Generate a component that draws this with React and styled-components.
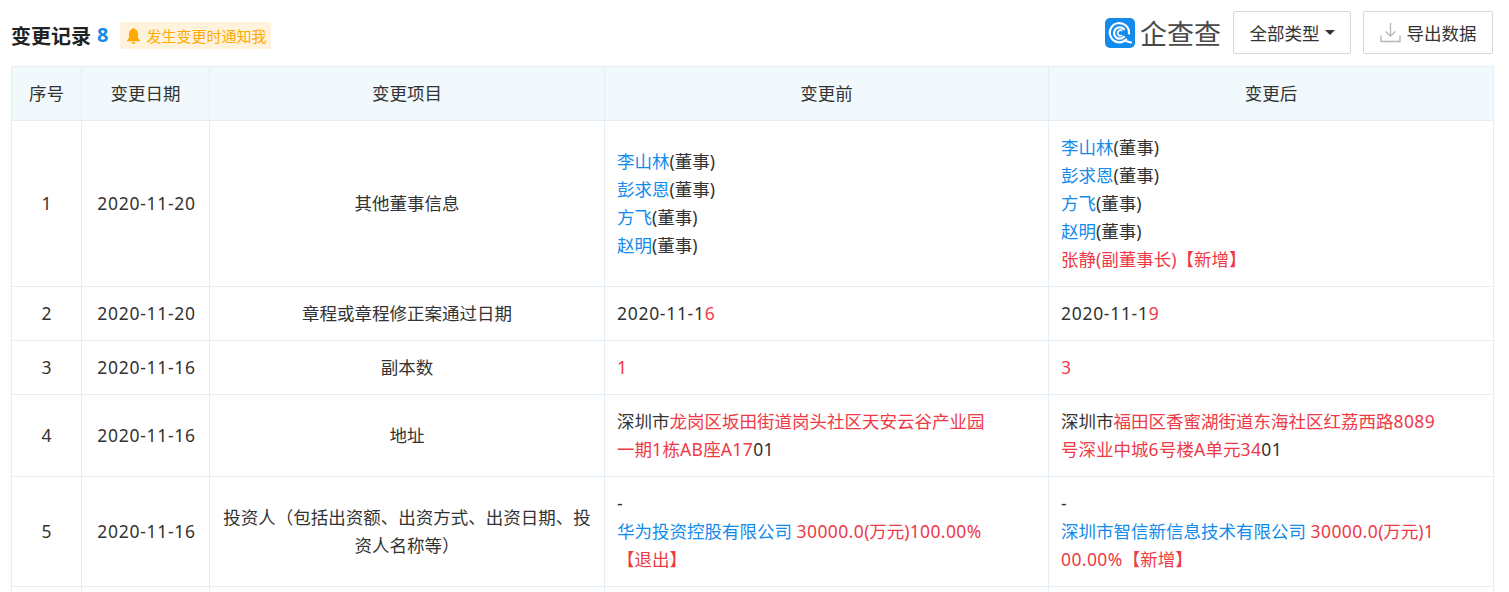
import React from "react";
import styled, { createGlobalStyle } from "styled-components";

const Global = createGlobalStyle`
  html, body { margin: 0; padding: 0; background: #fff; overflow: hidden; }
  body { font-family: "Noto Sans", "Noto Sans CJK SC", sans-serif; color: #333; }
`;

const Page = styled.div`
  width: 1509px;
  height: 592px;
  overflow: hidden;
  padding: 11px 16px 0 11px;
  box-sizing: border-box;
`;

const Toolbar = styled.header`
  display: flex;
  align-items: center;
  height: 43px;
  margin-bottom: 12px;
`;

const Heading = styled.div`
  display: flex;
  align-items: center;
  margin-top: 6px;
`;

const Title = styled.h3`
  margin: 0;
  font-size: 20px;
  font-weight: 700;
  color: #222;
  display: flex;
  gap: 6px;
`;

const Count = styled.span`
  color: #128bed;
`;

const Notice = styled.span`
  display: inline-flex;
  align-items: center;
  gap: 6px;
  height: 27px;
  margin-left: 12px;
  padding: 0 5px 0 7px;
  background: #fff3dd;
  border-radius: 2px;
  color: #ffaa00;
  font-size: 15px;
`;

const Tools = styled.div`
  margin-left: auto;
  display: flex;
  align-items: center;
`;

const Logo = styled.div`
  display: flex;
  align-items: center;
  gap: 5px;
  margin-right: 12px;
`;

const LogoText = styled.span`
  font-family: "Noto Sans CJK SC", sans-serif;
  font-weight: 400;
  font-size: 27px;
  color: #4a4a4a;
  line-height: 32px;
`;

const ToolButton = styled.button`
  display: inline-flex;
  align-items: center;
  justify-content: center;
  gap: ${(p) => p.$gap || 5}px;
  width: ${(p) => p.$width}px;
  height: 43px;
  margin-left: ${(p) => p.$left || 0}px;
  background: #fff;
  border: 1px solid #d6d6d6;
  border-radius: 2px;
  font: inherit;
  font-size: 17.5px;
  color: #333;
  padding: 0;
`;

const Caret = styled.i`
  width: 0;
  height: 0;
  border-left: 5px solid transparent;
  border-right: 5px solid transparent;
  border-top: 5px solid #333;
`;

const Table = styled.table`
  width: 1482px;
  table-layout: fixed;
  border-collapse: collapse;
  font-size: 17.5px;
  line-height: 28px;
`;

const Head = styled.th`
  background: #f2f9fc;
  border: 1px solid #e4eef6;
  font-weight: 400;
  height: 52px;
  padding: 0 0 1px;
  text-align: center;
  color: #333;
`;

const Cell = styled.td`
  border: 1px solid #e4eef6;
  padding: 12px 12px 13px;
  color: #333;
  word-break: break-all;
`;

const CenterCell = styled(Cell)`
  text-align: center;
`;

const DateCell = styled(CenterCell)`
  padding-left: 14px;
`;

const DetailCell = styled(Cell)`
  padding-right: 53px;
`;

const BlankCell = styled.td`
  border: 1px solid #e4eef6;
  height: 54px;
  padding: 0;
`;

const Link = styled.span`
  color: #128bed;
`;

const Red = styled.span`
  color: #ee3a47;
`;

const Num = styled.span`
  letter-spacing: ${(p) => (p.$date ? 0.7 : 0.4)}px;
`;

const BellIcon = () => (
  <svg width="13" height="16" viewBox="0 0 13 16">
    <path d="M6.500 0c.8 0 1.200.5 1.200 1.100 2.200.6 3.300 2.400 3.300 4.700v4.200l2 2.300v1H0v-1l2-2.300V5.800c0-2.300 1.100-4.100 3.300-4.700C5.300.5 5.700 0 6.500 0zM4.700 14.200h3.600C8.300 15.300 7.500 16 6.500 16s-1.800-.7-1.800-1.800z" fill="#ffaa00" />
  </svg>
);

const LogoIcon = () => (
  <svg width="30" height="30" viewBox="0 0 30 30">
    <rect width="30" height="30" rx="5" fill="#128bed" />
    <path d="M21.200 21.500A9.600 9.600 0 1 1 24 15.500" fill="none" stroke="#fff" strokeWidth="2.200" strokeLinecap="round" />
    <path d="M19 11.200a5.700 5.700 0 1 0 0 7.600" fill="none" stroke="#fff" strokeWidth="2.200" strokeLinecap="round" />
    <path d="M17.200 13a2.700 2.700 0 1 0 0 4" fill="none" stroke="#fff" strokeWidth="1.500" />
    <path d="M20.500 23l5.500 1.500" stroke="#fff" strokeWidth="2.200" strokeLinecap="round" />
  </svg>
);

const DownloadIcon = () => (
  <svg width="21" height="21" viewBox="0 0 21 21" fill="none" stroke="#b5b5b5" strokeWidth="1.300">
    <path d="M10.500 1v13M5.800 9.500l4.700 4.700 4.700-4.700M1 13.500v6h19v-6" />
  </svg>
);

const People = ({ names }) =>
  names.map(([n, r]) => (
    <div key={n}>
      <Link>{n}</Link>({r})
    </div>
  ));

const base = [["李山林", "董事"], ["彭求恩", "董事"], ["方飞", "董事"], ["赵明", "董事"]];

const DateText = ({ children }) => <Num $date>{children}</Num>;

export default function App() {
  return (
    <Page>
      <Global />
      <Toolbar>
        <Heading>
          <Title>
            变更记录 <Count>8</Count>
          </Title>
          <Notice>
            <BellIcon />
            发生变更时通知我
          </Notice>
        </Heading>
        <Tools>
          <Logo>
            <LogoIcon />
            <LogoText>企查查</LogoText>
          </Logo>
          <ToolButton $width={118}>
            全部类型
            <Caret />
          </ToolButton>
          <ToolButton $width={130} $left={12} $gap={6}>
            <DownloadIcon />
            导出数据
          </ToolButton>
        </Tools>
      </Toolbar>
      <Table>
        <colgroup>
          <col width="70" />
          <col width="128" />
          <col width="395" />
          <col width="444" />
          <col width="445" />
        </colgroup>
        <thead>
          <tr>
            <Head>序号</Head>
            <Head>变更日期</Head>
            <Head>变更项目</Head>
            <Head>变更前</Head>
            <Head>变更后</Head>
          </tr>
        </thead>
        <tbody>
          <tr>
            <CenterCell>1</CenterCell>
            <DateCell><DateText>2020-11-20</DateText></DateCell>
            <CenterCell>其他董事信息</CenterCell>
            <DetailCell><People names={base} /></DetailCell>
            <DetailCell>
              <People names={base} />
              <Red>张静(副董事长)【新增】</Red>
            </DetailCell>
          </tr>
          <tr>
            <CenterCell>2</CenterCell>
            <DateCell><DateText>2020-11-20</DateText></DateCell>
            <CenterCell>章程或章程修正案通过日期</CenterCell>
            <DetailCell><DateText>2020-11-1<Red>6</Red></DateText></DetailCell>
            <DetailCell><DateText>2020-11-1<Red>9</Red></DateText></DetailCell>
          </tr>
          <tr>
            <CenterCell>3</CenterCell>
            <DateCell><DateText>2020-11-16</DateText></DateCell>
            <CenterCell>副本数</CenterCell>
            <DetailCell><Red>1</Red></DetailCell>
            <DetailCell><Red>3</Red></DetailCell>
          </tr>
          <tr>
            <CenterCell>4</CenterCell>
            <DateCell><DateText>2020-11-16</DateText></DateCell>
            <CenterCell>地址</CenterCell>
            <DetailCell>深圳市<Red>龙岗区坂田街道岗头社区天安云谷产业园一期<Num>1</Num>栋<Num>AB</Num>座<Num>A17</Num></Red><Num>01</Num></DetailCell>
            <DetailCell>深圳市<Red>福田区香蜜湖街道东海社区红荔西路<Num>8089</Num>号深业中城<Num>6</Num>号楼<Num>A</Num>单元<Num>34</Num></Red><Num>01</Num></DetailCell>
          </tr>
          <tr>
            <CenterCell>5</CenterCell>
            <DateCell><DateText>2020-11-16</DateText></DateCell>
            <CenterCell>投资人（包括出资额、出资方式、出资日期、投资人名称等）</CenterCell>
            <DetailCell>
              <div>-</div>
              <Link>华为投资控股有限公司</Link> <Red><Num>30000.0</Num>(万元)<Num>100.00%</Num>【退出】</Red>
            </DetailCell>
            <DetailCell>
              <div>-</div>
              <Link>深圳市智信新信息技术有限公司</Link> <Red><Num>30000.0</Num>(万元)<Num>100.00%</Num>【新增】</Red>
            </DetailCell>
          </tr>
          <tr>
            <BlankCell />
            <BlankCell />
            <BlankCell />
            <BlankCell />
            <BlankCell />
          </tr>
        </tbody>
      </Table>
    </Page>
  );
}
